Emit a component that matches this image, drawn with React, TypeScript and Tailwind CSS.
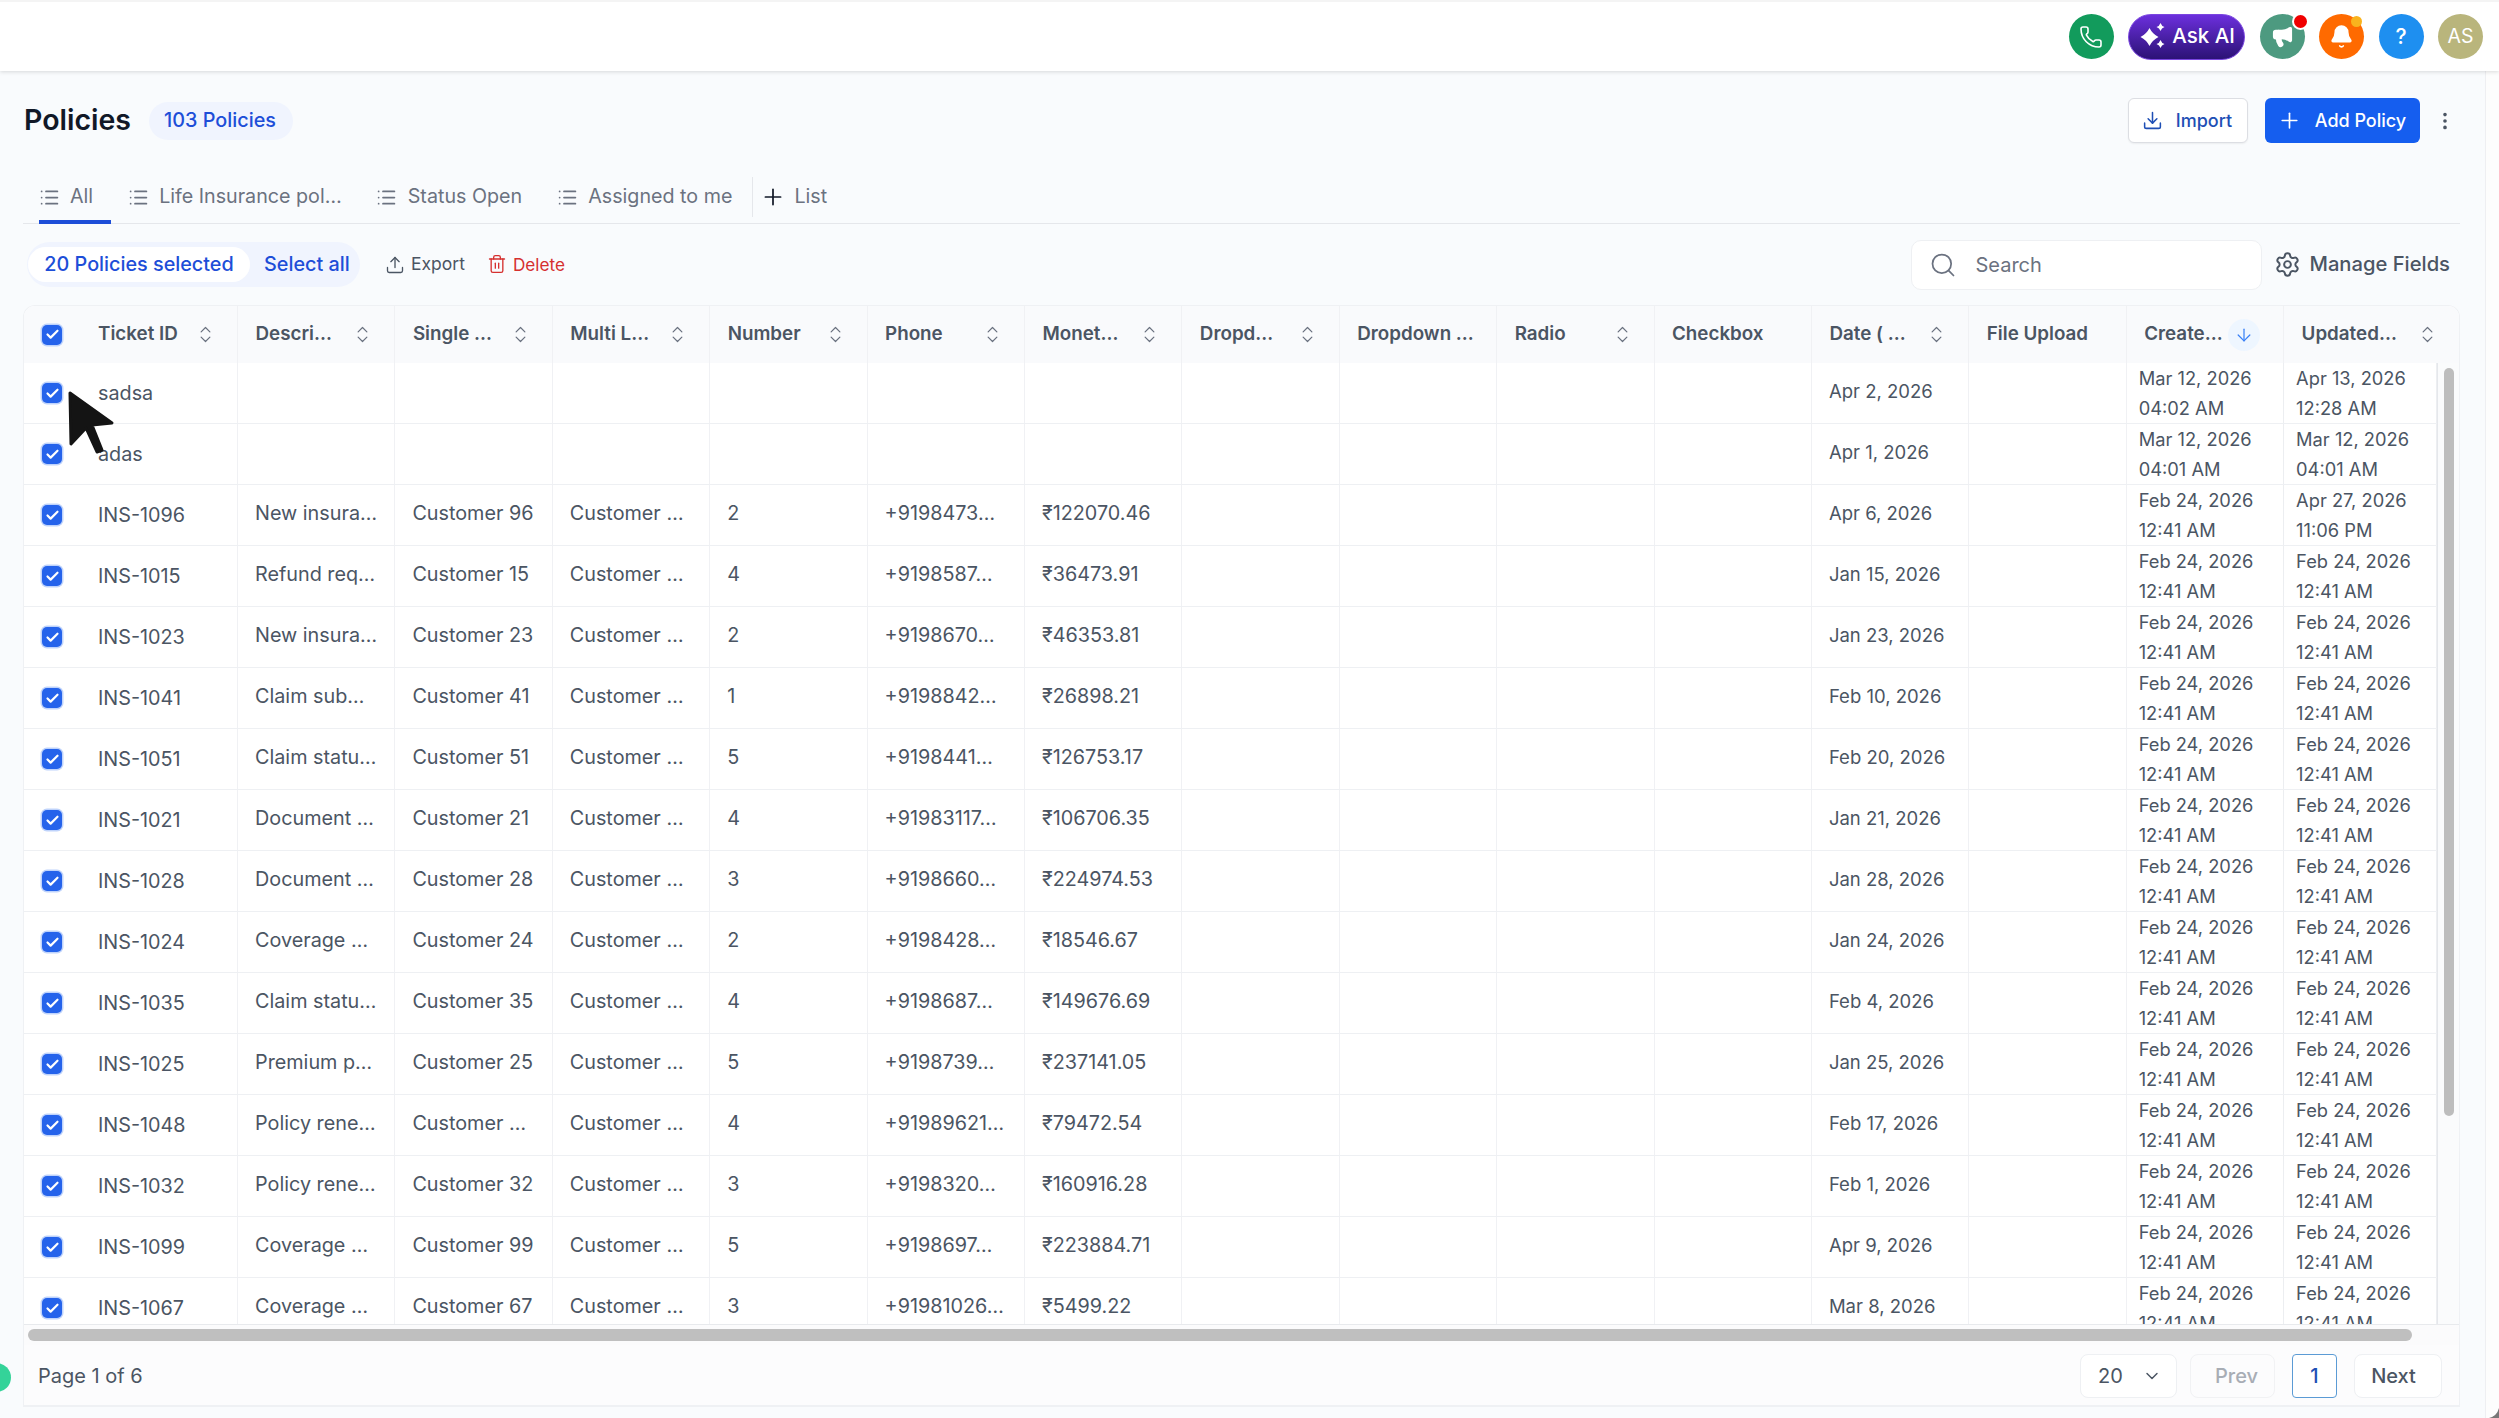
import { ArrowDown, Bell, Check, ChevronDown, ChevronsUpDown, Download, EllipsisVertical, List, Megaphone, Phone, Plus, Search, Settings, Trash2, Upload } from 'lucide-react';

const columns = [
  { label: 'Ticket ID', sort: true },
  { label: 'Descri…', sort: true },
  { label: 'Single …', sort: true },
  { label: 'Multi L…', sort: true },
  { label: 'Number', sort: true },
  { label: 'Phone', sort: true },
  { label: 'Monet…', sort: true },
  { label: 'Dropd…', sort: true },
  { label: 'Dropdown …', sort: false },
  { label: 'Radio', sort: true },
  { label: 'Checkbox', sort: false },
  { label: 'Date ( …', sort: true },
  { label: 'File Upload', sort: false },
  { label: 'Create…', sort: false, active: true },
  { label: 'Updated…', sort: true },
];

const rows = [
  { id: 'sadsa', date: 'Apr 2, 2026', created: ['Mar 12, 2026', '04:02 AM'], updated: ['Apr 13, 2026', '12:28 AM'] },
  { id: 'adas', date: 'Apr 1, 2026', created: ['Mar 12, 2026', '04:01 AM'], updated: ['Mar 12, 2026', '04:01 AM'] },
  { id: 'INS-1096', desc: 'New insura…', single: 'Customer 96', num: '2', phone: '+9198473…', money: '₹122070.46', date: 'Apr 6, 2026', updated: ['Apr 27, 2026', '11:06 PM'] },
  { id: 'INS-1015', desc: 'Refund req…', single: 'Customer 15', num: '4', phone: '+9198587…', money: '₹36473.91', date: 'Jan 15, 2026' },
  { id: 'INS-1023', desc: 'New insura…', single: 'Customer 23', num: '2', phone: '+9198670…', money: '₹46353.81', date: 'Jan 23, 2026' },
  { id: 'INS-1041', desc: 'Claim sub…', single: 'Customer 41', num: '1', phone: '+9198842…', money: '₹26898.21', date: 'Feb 10, 2026' },
  { id: 'INS-1051', desc: 'Claim statu…', single: 'Customer 51', num: '5', phone: '+9198441…', money: '₹126753.17', date: 'Feb 20, 2026' },
  { id: 'INS-1021', desc: 'Document …', single: 'Customer 21', num: '4', phone: '+91983117…', money: '₹106706.35', date: 'Jan 21, 2026' },
  { id: 'INS-1028', desc: 'Document …', single: 'Customer 28', num: '3', phone: '+9198660…', money: '₹224974.53', date: 'Jan 28, 2026' },
  { id: 'INS-1024', desc: 'Coverage …', single: 'Customer 24', num: '2', phone: '+9198428…', money: '₹18546.67', date: 'Jan 24, 2026' },
  { id: 'INS-1035', desc: 'Claim statu…', single: 'Customer 35', num: '4', phone: '+9198687…', money: '₹149676.69', date: 'Feb 4, 2026' },
  { id: 'INS-1025', desc: 'Premium p…', single: 'Customer 25', num: '5', phone: '+9198739…', money: '₹237141.05', date: 'Jan 25, 2026' },
  { id: 'INS-1048', desc: 'Policy rene…', single: 'Customer …', num: '4', phone: '+91989621…', money: '₹79472.54', date: 'Feb 17, 2026' },
  { id: 'INS-1032', desc: 'Policy rene…', single: 'Customer 32', num: '3', phone: '+9198320…', money: '₹160916.28', date: 'Feb 1, 2026' },
  { id: 'INS-1099', desc: 'Coverage …', single: 'Customer 99', num: '5', phone: '+9198697…', money: '₹223884.71', date: 'Apr 9, 2026' },
  { id: 'INS-1067', desc: 'Coverage …', single: 'Customer 67', num: '3', phone: '+91981026…', money: '₹5499.22', date: 'Mar 8, 2026' },
];

type Row = (typeof rows)[number] & { desc?: string; single?: string; num?: string; phone?: string; money?: string; created?: string[]; updated?: string[] };

const tabs = ['All', 'Life Insurance pol…', 'Status Open', 'Assigned to me'];
const defaultStamp = ['Feb 24, 2026', '12:41 AM'];

function Checkbox() {
  return (
    <div className="flex h-[20px] w-[20px] shrink-0 items-center justify-center rounded-[5px] bg-[#2563eb] shadow-[0_0_0_1.5px_#bfd3fb]">
      <Check size={15} strokeWidth={3.5} className="text-white" />
    </div>
  );
}

function Cell({ children }: { children?: React.ReactNode }) {
  return <div className="flex items-center overflow-hidden whitespace-nowrap border-r border-[#f0f1f4] px-[17px] pb-[2px]">{children}</div>;
}

function Stamp({ lines }: { lines: string[] }) {
  return (
    <div className="flex flex-col justify-center border-r border-[#eceef1] pl-[12px] text-[18.3px] leading-[30px] whitespace-nowrap">
      <span>{lines[0]}</span>
      <span>{lines[1]}</span>
    </div>
  );
}

function Sparkle() {
  return (
    <svg width="26" height="28" viewBox="0 0 26 28" fill="white" className="shrink-0">
      <path d="M9.5 5 Q12.5 11 18.5 14 Q12.5 17 9.5 23 Q6.5 17 0.5 14 Q6.5 11 9.5 5Z" />
      <path d="M20.5 0 Q21.5 3 24.5 4 Q21.5 5 20.5 8 Q19.5 5 16.5 4 Q19.5 3 20.5 0Z" />
      <path d="M20.5 17 Q21.5 20 24.5 21 Q21.5 22 20.5 25 Q19.5 22 16.5 21 Q19.5 20 20.5 17Z" />
    </svg>
  );
}

function Topbar() {
  return (
    <header className="relative z-10 flex h-[71px] shrink-0 items-center justify-end gap-[14.5px] border-t-2 border-[#f4f4f4] bg-white pr-[16px] shadow-[0_1px_4px_rgba(0,0,0,0.14)]">
      <div className="flex h-[45px] w-[45px] items-center justify-center rounded-full bg-[#129b5c]">
        <Phone size={24} strokeWidth={1.6} className="text-white" />
      </div>
      <div className="flex h-[46px] w-[117px] items-center justify-center gap-[6px] rounded-full border border-[#7a45e0] bg-gradient-to-b from-[#6c2fdd] to-[#2c1276] pl-[2px] text-[20.5px] font-medium text-white">
        <Sparkle />
        Ask AI
      </div>
      <div className="relative flex h-[45px] w-[45px] items-center justify-center rounded-full bg-[#4d9a80]">
        <Megaphone size={23} fill="white" strokeWidth={2} className="text-white" />
        <div className="absolute right-[-4px] top-[-1px] h-[17px] w-[17px] rounded-full border-2 border-white bg-[#f00000]" />
      </div>
      <div className="relative flex h-[45px] w-[45px] items-center justify-center rounded-full bg-[#ff6a00]">
        <Bell size={25} fill="white" strokeWidth={1.5} className="text-white" />
        <div className="absolute right-[2px] top-[2px] h-[11px] w-[11px] rounded-full bg-[#f9b31d]" />
      </div>
      <div className="flex h-[45px] w-[45px] items-center justify-center rounded-full bg-[#1e8ff0] text-[21px] font-medium text-white">?</div>
      <div className="flex h-[45px] w-[45px] items-center justify-center rounded-full bg-[#b9b57c] text-[19.5px] text-white">AS</div>
    </header>
  );
}

function PageHead() {
  return (
    <div className="flex h-[96px] shrink-0 items-center pl-[1px] pt-[3px]">
      <h1 className="text-[28.5px] font-semibold text-[#111827]">Policies</h1>
      <span className="ml-[18px] flex h-[38px] w-[144px] items-center justify-center rounded-full bg-[#f0f4fe] pr-[2px] text-[19.8px] font-medium text-[#1d4ed8]">103 Policies</span>
      <div className="ml-auto flex items-center pr-[4px]">
        <button className="flex h-[45px] w-[120px] items-center justify-center gap-[13px] rounded-[6px] border border-[#dcdee3] bg-white pr-[2px] text-[18px] font-medium text-[#1e4fb5] shadow-[0_1px_2px_rgba(0,0,0,0.06)]">
          <Download size={21} strokeWidth={1.75} />
          Import
        </button>
        <button className="ml-[17px] flex h-[45px] w-[155px] items-center justify-center gap-[13px] rounded-[6px] bg-[#155eef] pr-[2px] text-[18px] font-medium text-white">
          <Plus size={25} strokeWidth={1.6} />
          Add Policy
        </button>
        <EllipsisVertical size={22} strokeWidth={2} className="ml-[14px] text-[#4b5563]" />
      </div>
    </div>
  );
}

function Tabs() {
  return (
    <nav className="flex h-[57px] shrink-0 items-stretch gap-[17px] border-b border-[#e5e7eb] pl-[15.5px] text-[19.7px] text-[#6b7280]">
      {tabs.map((tab, i) => (
        <div key={tab} className="relative flex items-center gap-[10.5px] pr-[17.5px] pt-[4px]">
          <List size={21} strokeWidth={2} />
          {tab}
          {i === 0 && <div className="absolute bottom-[-1px] left-0 right-0 h-[4px] bg-[#1d4ed8]" />}
        </div>
      ))}
      <div className="ml-[-15px] mt-[10px] mb-[6px] flex items-center gap-[8.5px] border-l border-[#e5e7eb] pl-[7px]">
        <Plus size={26} strokeWidth={1.6} className="text-[#111827]" />
        List
      </div>
    </nav>
  );
}

function Toolbar() {
  return (
    <div className="flex h-[81px] shrink-0 items-center pl-[4px]">
      <div className="flex h-[45px] w-[333px] items-center rounded-full bg-[#f0f4fe] pl-[1px] text-[19.8px] font-medium text-[#1d4ed8]">
        <span className="flex h-[35px] w-[222px] items-center justify-center rounded-full bg-white">20 Policies selected</span>
        <span className="ml-[14px]">Select all</span>
      </div>
      <div className="ml-[25px] flex items-center gap-[6px] text-[17.5px] text-[#4b5563]">
        <Upload size={20} strokeWidth={1.6} />
        Export
      </div>
      <div className="ml-[22px] flex items-center gap-[6px] text-[17.2px] text-[#d5302f]">
        <Trash2 size={20} strokeWidth={1.6} />
        Delete
      </div>
      <div className="ml-auto flex items-center gap-[12px] pr-[10px]">
        <div className="flex h-[50px] w-[351px] items-center gap-[18px] rounded-[10px] border border-[#eef0f3] bg-white pl-[17px]">
          <Search size={28} strokeWidth={1.5} className="text-[#6b7280]" />
          <input placeholder="Search" className="w-[200px] bg-transparent text-[20px] outline-none placeholder:text-[#6b7280]" />
        </div>
        <div className="flex items-center gap-[8px] text-[20.2px] font-medium text-[#4b5563]">
          <Settings size={27} strokeWidth={1.75} />
          Manage Fields
        </div>
      </div>
    </div>
  );
}

function TableHead() {
  return (
    <div className="grid h-[57px] shrink-0 grid-cols-[214px_repeat(13,157.4px)_1fr] bg-[#f9fafc] text-[18.8px] font-semibold text-[#4b5563]">
      {columns.map((col, i) => (
        <div key={col.label} className="relative flex items-center border-r border-[#f0f1f4] pl-[17.5px] whitespace-nowrap last:border-r-0">
          {i === 0 && (
            <div className="mr-[36px] ml-[0.5px]">
              <Checkbox />
            </div>
          )}
          {col.label}
          {col.sort && <ChevronsUpDown size={21} strokeWidth={1.4} className="absolute right-[21px] top-[18px] text-[#6b7280]" />}
          {col.active && (
            <div className="absolute right-[23px] top-[13px] flex h-[32px] w-[32px] items-center justify-center rounded-full bg-[#eef6ff]">
              <ArrowDown size={20} strokeWidth={1.5} className="text-[#3b82f6]" />
            </div>
          )}
        </div>
      ))}
    </div>
  );
}

function TableRow({ row }: { row: Row }) {
  return (
    <div className="grid h-[61px] shrink-0 grid-cols-[214px_repeat(13,157.4px)_1fr] border-b border-[#eef0f3]">
      <div className="flex items-center border-r border-[#f0f1f4] pl-[18px]">
        <Checkbox />
        <span className="ml-[36px] pt-[1px]">{row.id}</span>
      </div>
      <Cell>{row.desc}</Cell>
      <Cell>{row.single}</Cell>
      <Cell>{row.desc ? 'Customer …' : ''}</Cell>
      <Cell>{row.num}</Cell>
      <Cell>{row.phone}</Cell>
      <Cell>{row.money}</Cell>
      <Cell />
      <Cell />
      <Cell />
      <Cell />
      <Cell>
        <span className="text-[18.5px]">{row.date}</span>
      </Cell>
      <Cell />
      <Stamp lines={row.created ?? defaultStamp} />
      <Stamp lines={row.updated ?? defaultStamp} />
    </div>
  );
}

function Pager() {
  return (
    <div className="flex h-[62px] shrink-0 items-center bg-[#fcfcfd] pl-[14px] pr-[17px] text-[20px] text-[#4b5563]">
      <span>Page 1 of 6</span>
      <div className="ml-auto flex items-center font-medium">
        <div className="flex h-[44px] w-[97px] items-center gap-[19px] rounded-[8px] border border-[#eef0f3] bg-white pl-[17px] font-normal">
          20
          <ChevronDown size={20} strokeWidth={1.75} className="text-[#4b5563]" />
        </div>
        <div className="ml-[13px] flex h-[44px] w-[85px] items-center justify-center rounded-[8px] border border-[#f1f2f4] pl-[8px] text-[#a8adb5]">Prev</div>
        <div className="ml-[17px] flex h-[44px] w-[45px] items-center justify-center rounded-[4px] border border-[#5b9bd5] bg-white text-[#1e4fb5]">1</div>
        <div className="ml-[17px] flex h-[44px] w-[88px] items-center justify-center rounded-[8px] border border-[#eef0f3] bg-white pr-[9px]">Next</div>
      </div>
    </div>
  );
}

export default function App() {
  return (
    <div className="relative flex h-screen w-full flex-col overflow-hidden bg-[#fdfdfd] font-['Inter',sans-serif]">
      <Topbar />
      <main className="flex w-[2486px] flex-1 flex-col overflow-hidden border-r border-[#eeeff2] bg-[#f9fbfd] pl-[23px] pr-[25px]">
        <PageHead />
        <Tabs />
        <Toolbar />
        <div className="flex h-[1102px] shrink-0 flex-col overflow-hidden rounded-t-[12px] border border-b-2 border-[#eff1f4] bg-white text-[19.8px] text-[#4b5563]">
          <TableHead />
          <div className="flex h-[961px] shrink-0">
            <div className="flex flex-1 flex-col overflow-hidden border-r border-[#e5e7eb]">
              {rows.map((row) => (
                <TableRow key={row.id} row={row} />
              ))}
            </div>
            <div className="w-[21px] shrink-0 bg-[#fafbfc] pl-[6px] pt-[5px]">
              <div className="h-[748px] w-[10px] rounded-full bg-[#bdbdbd]" />
            </div>
          </div>
          <div className="h-[21px] shrink-0 border-t border-[#e8eaed] bg-[#fbfbfc] pl-[4px] pt-[4px]">
            <div className="h-[12px] w-[2384px] rounded-full bg-[#bfbfbf]" />
          </div>
          <Pager />
        </div>
      </main>

      {/* mouse pointer in the recording */}
      <svg className="absolute left-[60px] top-[385px]" width="60" height="75" viewBox="0 0 60 75">
        <path d="M10 8 L52 38 L32 40 L42 65 L37 67 L26 43 L11 59 Z" fill="#141414" stroke="#141414" strokeWidth="3" strokeLinejoin="round" />
      </svg>
      <div className="absolute left-[-18px] top-[1363px] h-[29px] w-[29px] rounded-full bg-[#34d399]" />
      <svg className="absolute bottom-0 right-0" width="10" height="10" viewBox="0 0 10 10">
        <path d="M10 0 L10 10 L0 10 Q8 8 10 0Z" fill="#777" />
      </svg>
    </div>
  );
}
